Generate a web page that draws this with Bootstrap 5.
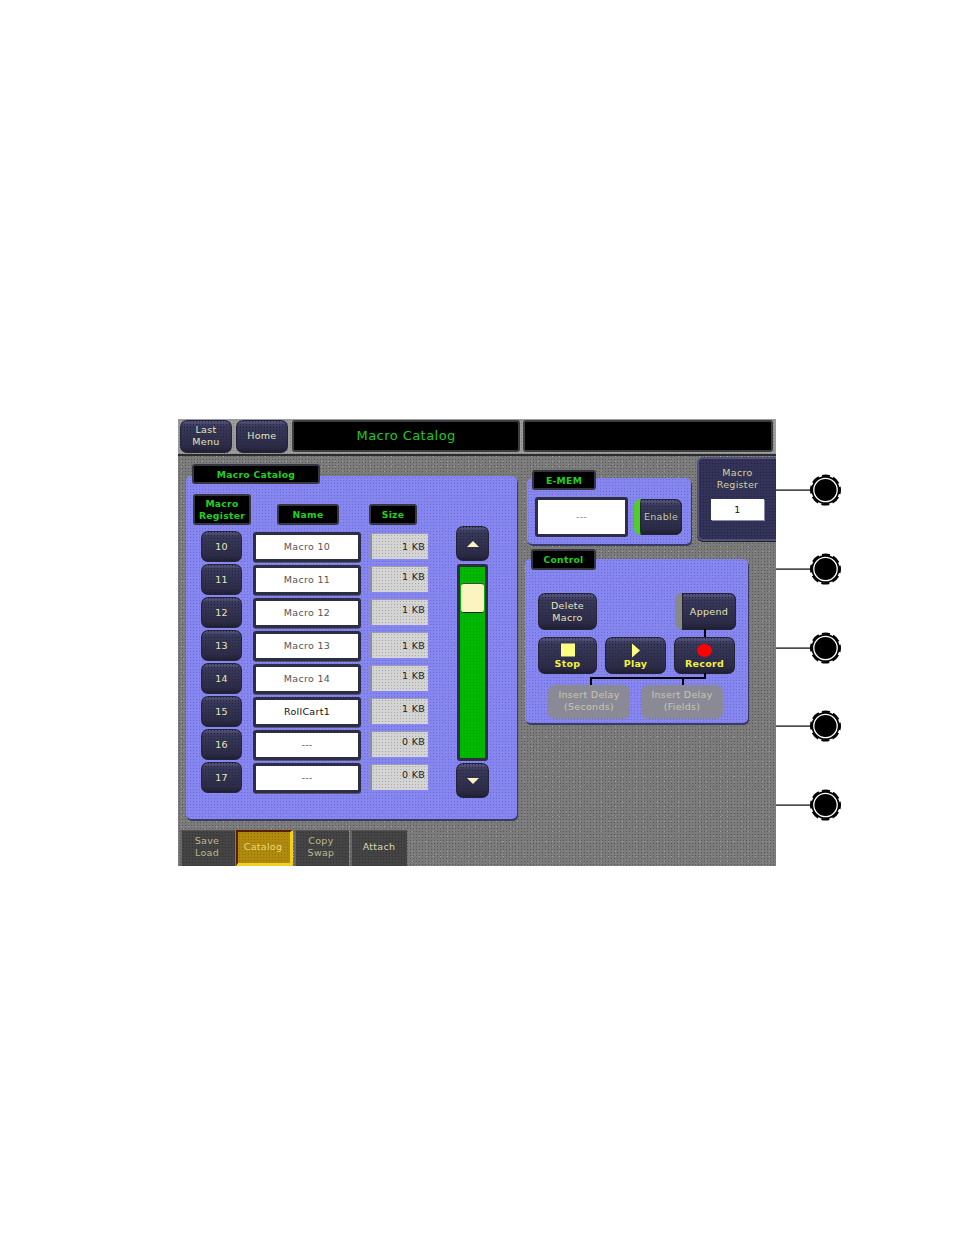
<!DOCTYPE html>
<html lang="en"><head><meta charset="utf-8"><title>Macro Catalog</title>
<link href="https://cdn.jsdelivr.net/npm/bootstrap@5.3.0/dist/css/bootstrap.min.css" rel="stylesheet">
<style>
html,body{background:#fff;margin:0}
body{font-family:"DejaVu Sans",sans-serif;font-size:9.5px;line-height:12px;letter-spacing:.3px}
.stage{position:relative;width:954px;height:1235px;padding:419px 0 0 178px}
.scr{width:598px;height:447px;background-color:#7b7b7b;background-image:radial-gradient(#5a5a5a .9px,transparent .9px),radial-gradient(#a2a2a2 .8px,transparent .8px),radial-gradient(#979797 .8px,transparent .8px);background-size:3px 3px,7px 5px,11px 13px;display:flex;flex-direction:column;overflow:hidden}
.topb{height:37px;flex:none;background-color:#9c9c9c;background-image:radial-gradient(#7c7c7c 1px,transparent 1px);background-size:3px 3px;border-bottom:2px solid #2b2b2b;padding:0 3px 0 2px;gap:4px}
.nbtn,.bbtn,.tbtn{display:flex;align-items:center;justify-content:center;text-align:center}
.nbtn{color:#e6e6b8;background-color:#33334f;background-image:radial-gradient(#252540 1px,transparent 1px),linear-gradient(#5f5f88,#38385a 18%,#2c2c48 80%,#1c1c2c);background-size:3px 3px,100% 100%;border-radius:7px;box-shadow:inset 0 0 0 1px #23233a}
.topb .nbtn{width:52px;height:33px;margin-top:1px;padding-bottom:2px}
.ttl{background:#000;border:2px solid #3d3d3d;border-radius:3px;height:32px;margin-top:1px;color:#22c922;font-size:13px;letter-spacing:.45px;display:flex;align-items:center;justify-content:center}
.tw1{width:229px}.tw2{width:250px;margin-left:-1px}
.mid{flex:1;position:relative;min-height:0}
.lft{width:349px;padding:8px 0 0 8px;flex:none}
.tag{background:#000;color:#22d022;font-weight:700;font-size:9.2px;letter-spacing:.3px;border:2px solid #363640;border-radius:3px;display:flex;align-items:center;justify-content:center;text-align:center;position:relative;z-index:2;padding-top:1px}
.tag1{width:128px;height:20px;margin-left:6px;margin-bottom:-8px}
.pnl{background-color:#8686f0;background-image:radial-gradient(#6c6cd4 .9px,transparent .9px),radial-gradient(#a08ae8 .8px,transparent .8px);background-size:3px 3px,8px 7px;border-radius:5px;box-shadow:1px 2px 0 #3a3a66}
.p1{width:331px;height:343px;padding:18px 0 0 7px}
.hdr{height:31px;align-items:flex-end}
.t-mr{width:58px;height:31px;line-height:12px}
.t-nm{width:62px;height:21px;margin-left:26px}
.t-sz{width:48px;height:21px;margin-left:30px}
.lst{width:262px;padding-top:6px;gap:2px}
.rw{height:31px;align-items:flex-start}
.rb{width:41px;height:31px;margin-left:8px;font-size:9.5px}
.nf{width:108px;height:30px;margin-left:11px;margin-top:1px;background-color:#fff;background-image:radial-gradient(#bdbdbd .7px,transparent .7px);background-size:6px 6px;border:3px solid #2d2d44;border-radius:3px;color:#555;display:flex;align-items:center;justify-content:center;box-shadow:0 1px 0 #55557a}
.nf.dk{color:#111}
.sf{width:58px;height:26px;margin-left:9px;margin-top:2px;background-color:#d4d4d4;background-image:radial-gradient(#a9a9a9 .8px,transparent .8px);background-size:3px 3px;color:#222;display:flex;align-items:flex-start;justify-content:flex-end;padding:4px 3px 0 0;border-left:2px solid #8c8ca8;border-top:1px solid #9a9ab0}
.sf.lo{padding-top:7px}
.sc{width:33px;margin-left:1px;margin-top:1px;gap:3px}
.ar{width:33px;height:35px}
.trk{width:31px;height:197px;margin-left:1px;margin-bottom:-1px;background-color:#00b800;background-image:radial-gradient(#00a000 1px,transparent 1px);background-size:3px 3px;border:3px solid #2d2d44;border-radius:3px;padding-top:16px}
.thm{width:23px;height:30px;margin-left:1px;background-color:#fbf3c0;background-image:radial-gradient(#dcd5a0 .7px,transparent .7px);background-size:6px 6px;border-radius:3px;border-bottom:1px solid #222;border-top:1px solid #444}
.rgt{width:249px;flex:none;position:relative;padding:0}
.tag2{width:64px;height:20px;margin-left:5px;margin-bottom:-12px;margin-top:14px}
.p2{width:164px;height:66px;margin-left:0;padding:19px 0 0 8px;gap:6px}
.emf{width:93px;height:40px;background-color:#fff;background-image:radial-gradient(#bdbdbd .7px,transparent .7px);background-size:6px 6px;border:3px solid #2d2d44;border-radius:3px;color:#888;display:flex;align-items:center;justify-content:center}
.enb{width:48px;height:36px;margin-top:2px;border-left:6px solid #4bd023;color:#c8c8a0}
.mreg{position:absolute;left:170px;top:1px;width:79px;height:84px;background-color:#33335a;background-image:radial-gradient(#23233f 1px,transparent 1px);background-size:3px 3px;border:2px solid #52527e;border-right:0;border-radius:6px 0 0 6px;color:#d4d49a;text-align:center;padding-top:8px;box-shadow:0 1px 0 #222}
.mbx{width:53px;height:21px;margin:8px 0 0 12px;background:#fff;color:#111;display:flex;align-items:center;justify-content:center;box-shadow:1px 1px 0 #8a8aa8}
.tag3{width:65px;height:21px;margin-left:4px;margin-top:5px;margin-bottom:-11px}
.p3{width:223px;height:164px;position:relative;margin-left:-2px;padding:34px 0 0 13px}
.cb{height:37px;width:59px;line-height:12px}
.app{width:61px;border-left:7px solid #888;margin-left:78px}
.gp{gap:8px;margin-top:7px;}
.yel{color:#f2f23c;font-weight:700;flex-direction:column;line-height:11px;padding-top:1px}
.ic{display:block;height:15px;flex:none}
.dbt{width:82px;height:34px;background:#8a8a96;color:#c6c6b0;border-radius:7px;display:flex;align-items:center;justify-content:center;text-align:center;line-height:12px;padding-bottom:2px}
.dgr{gap:11px;margin:11px 0 0 10px}
.ln{position:absolute;background:#000}
.bot{height:36px;flex:none;padding-left:2px;gap:1px}
.tbtn{width:55px;height:36px;padding:0 3px 3px 0;color:#b9b98c;background-color:#444;background-image:radial-gradient(#333 1px,transparent 1px);background-size:3px 3px;border-left:2px solid #666;border-top:1px solid #555}
.tbtn.on{width:57px;color:#e8d87a;background-color:#b08a0c;background-image:radial-gradient(#94720a 1px,transparent 1px);border:2px solid #5a1e00;border-right:3px solid #f0d020;border-bottom:3px solid #f0d020;padding:0 2px 1px 0}
.tbtn.att{color:#d8d8b0;width:57px;padding-right:1px}
.call{position:absolute;left:776px;width:66px;height:34px}
.pa1{top:473px}.pa2{top:552px}.pa3{top:631px}.pa4{top:709px}.pa5{top:788px}
</style></head>
<body>
<div class="stage">
<div class="scr">
  <div class="topb d-flex">
    <div class="nbtn">Last<br>Menu</div>
    <div class="nbtn">Home</div>
    <div class="ttl tw1">Macro Catalog</div>
    <div class="ttl tw2"></div>
  </div>
  <div class="mid d-flex">
    <div class="lft">
      <div class="tag tag1">Macro Catalog</div>
      <div class="pnl p1">
        <div class="d-flex hdr">
          <div class="tag t-mr">Macro<br>Register</div>
          <div class="tag t-nm">Name</div>
          <div class="tag t-sz">Size</div>
        </div>
        <div class="d-flex">
          <div class="d-flex flex-column lst">
            <div class="d-flex rw"><div class="nbtn rb">10</div><div class="nf">Macro 10</div><div class="sf lo">1 KB</div></div>
            <div class="d-flex rw"><div class="nbtn rb">11</div><div class="nf">Macro 11</div><div class="sf">1 KB</div></div>
            <div class="d-flex rw"><div class="nbtn rb">12</div><div class="nf">Macro 12</div><div class="sf">1 KB</div></div>
            <div class="d-flex rw"><div class="nbtn rb">13</div><div class="nf">Macro 13</div><div class="sf lo">1 KB</div></div>
            <div class="d-flex rw"><div class="nbtn rb">14</div><div class="nf">Macro 14</div><div class="sf">1 KB</div></div>
            <div class="d-flex rw"><div class="nbtn rb">15</div><div class="nf dk">RollCart1</div><div class="sf">1 KB</div></div>
            <div class="d-flex rw"><div class="nbtn rb">16</div><div class="nf">---</div><div class="sf">0 KB</div></div>
            <div class="d-flex rw"><div class="nbtn rb">17</div><div class="nf">---</div><div class="sf">0 KB</div></div>
          </div>
          <div class="d-flex flex-column sc">
            <div class="nbtn ar"><svg width="12" height="6" viewBox="0 0 12 6"><path d="M6 0L12 6H0Z" fill="#fbf3c0"/></svg></div>
            <div class="trk"><div class="thm"></div></div>
            <div class="nbtn ar"><svg width="12" height="6" viewBox="0 0 12 6"><path d="M0 0H12L6 6Z" fill="#fbf3c0"/></svg></div>
          </div>
        </div>
      </div>
    </div>
    <div class="rgt">
      <div class="mreg">Macro<br>Register<div class="mbx">1</div></div>
      <div class="tag tag2">E-MEM</div>
      <div class="pnl p2 d-flex">
        <div class="emf">---</div>
        <div class="nbtn enb">Enable</div>
      </div>
      <div class="tag tag3">Control</div>
      <div class="pnl p3">
        <div class="ln" style="left:179px;top:70px;width:2px;height:8px"></div>
        <div class="ln" style="left:179px;top:114px;width:2px;height:6px"></div>
        <div class="ln" style="left:65px;top:118px;width:116px;height:2px"></div>
        <div class="ln" style="left:65px;top:118px;width:2px;height:8px"></div>
        <div class="ln" style="left:157px;top:118px;width:2px;height:8px"></div>
        <div class="d-flex">
          <div class="nbtn cb">Delete<br>Macro</div>
          <div class="nbtn cb app">Append</div>
        </div>
        <div class="d-flex gp">
          <div class="nbtn cb yel"><svg class="ic" width="14" height="14" viewBox="0 0 14 14"><rect width="14" height="13" fill="#ffff80"/></svg>Stop</div>
          <div class="nbtn cb yel" style="width:61px"><svg class="ic" width="8" height="14" viewBox="0 0 8 14"><path d="M0 0L8 7 0 14Z" fill="#ffff80"/></svg>Play</div>
          <div class="nbtn cb yel" style="width:61px"><svg class="ic" width="15" height="14" viewBox="0 0 15 14"><ellipse cx="7.500" cy="7" rx="7.500" ry="6.500" fill="#f00"/></svg>Record</div>
        </div>
        <div class="d-flex dgr">
          <div class="dbt">Insert Delay<br>(Seconds)</div>
          <div class="dbt">Insert Delay<br>(Fields)</div>
        </div>
      </div>
    </div>
  </div>
  <div class="bot d-flex">
    <div class="tbtn">Save<br>Load</div>
    <div class="tbtn on">Catalog</div>
    <div class="tbtn">Copy<br>Swap</div>
    <div class="tbtn att">Attach</div>
  </div>
</div>
<svg class="call pa1" viewBox="0 0 66 34"><use href="#co"/></svg>
<svg class="call pa2" viewBox="0 0 66 34"><use href="#co"/></svg>
<svg class="call pa3" viewBox="0 0 66 34"><use href="#co"/></svg>
<svg class="call pa4" viewBox="0 0 66 34"><use href="#co"/></svg>
<svg class="call pa5" viewBox="0 0 66 34"><use href="#co"/></svg>
<svg width="0" height="0" class="position-absolute"><defs><g id="co">
  <rect x="0" y="16.500" width="36" height="1.200" fill="#000"/>
  <circle cx="49.500" cy="17" r="14" fill="#000"/>
  <circle cx="49.500" cy="17" r="14.500" fill="none" stroke="#000" stroke-width="2" stroke-dasharray="8 3.390" stroke-dashoffset="4"/>
  <circle cx="49.500" cy="17" r="11.700" fill="#000" stroke="#fff" stroke-width="1.300"/>
</g></defs></svg>
</div>
<script src="https://cdn.jsdelivr.net/npm/bootstrap@5.3.0/dist/js/bootstrap.bundle.min.js"></script>
</body></html>
